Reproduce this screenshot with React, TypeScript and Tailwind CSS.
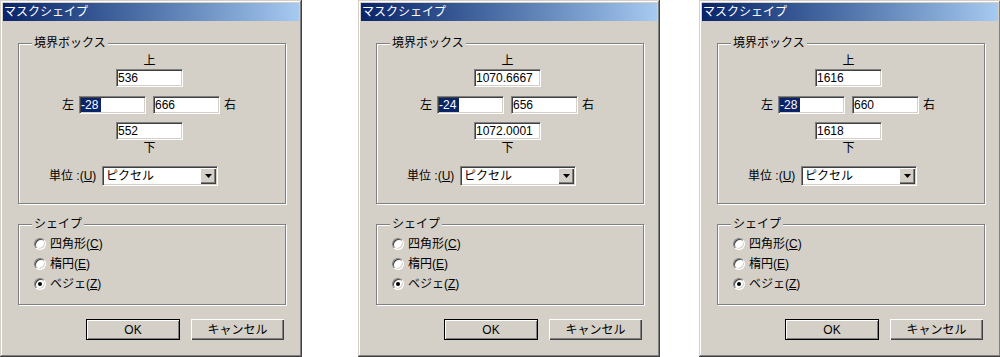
const sunken =
  "border border-t-[#808080] border-l-[#808080] border-b-white border-r-white shadow-[inset_1px_1px_0_#404040,inset_-1px_-1px_0_#d4d0c8]";

type Box = { top: string; left: string; right: string; bottom: string };

function Field({ value, selected, className = "" }: { value: string; selected?: boolean; className?: string }) {
  return (
    <div className={`h-[18px] w-[67px] bg-white ${sunken} flex items-center pl-[1px] ${className}`}>
      {selected ? (
        <span className="bg-[#0a246a] text-white leading-[14px] pr-[3px]">{value}</span>
      ) : (
        <span className="leading-[14px]">{value}</span>
      )}
    </div>
  );
}

function Radio({ label, keyChar, checked }: { label: string; keyChar: string; checked?: boolean }) {
  return (
    <div className="h-[20px] flex items-center ml-[15px] gap-[4px]">
      <span
        className={`w-3 h-3 rounded-full bg-white ${sunken} flex items-center justify-center`}
      >
        {checked && <span className="w-1 h-1 rounded-full bg-black" />}
      </span>
      <span className="leading-[14px]">
        {label}(<span className="underline">{keyChar}</span>)
      </span>
    </div>
  );
}

function Dialog({ box, className = "" }: { box: Box; className?: string }) {
  return (
    <div
      className={`relative w-[302px] h-[357px] shrink-0 bg-[#d4d0c8] pt-[3px] shadow-[inset_-1px_-1px_0_#404040,inset_1px_1px_0_#d4d0c8,inset_-2px_-2px_0_#808080,inset_2px_2px_0_#fff] ${className}`}
    >
      <div className="mx-[3px] h-[18px] bg-gradient-to-r from-[#0a246a] to-[#a6caf0] text-white leading-[18px] pl-[1px]">
        マスクシェイプ
      </div>

      {/* 境界ボックス */}
      <div className="relative ml-[18px] mt-[22px] w-[268px] h-[161px] border border-[#808080] shadow-[1px_1px_0_#fff,inset_1px_1px_0_#fff] pt-[10px]">
        <span className="absolute left-[13px] top-[-8px] px-[2px] bg-[#d4d0c8] leading-[14px]">境界ボックス</span>

        <div className="ml-[97px] w-[67px] flex flex-col items-center">
          <span className="leading-[14px]">上</span>
          <Field value={box.top} className="mt-[1px]" />
        </div>

        <div className="mt-[9px] flex items-center">
          <span className="ml-[43px] w-[12px] leading-[14px]">左</span>
          <Field value={box.left} selected className="ml-[5px]" />
          <Field value={box.right} className="ml-[7px]" />
          <span className="ml-[4px] leading-[14px]">右</span>
        </div>

        <div className="ml-[97px] w-[67px] mt-[8px] flex flex-col items-center">
          <Field value={box.bottom} />
          <span className="mt-[1px] leading-[14px]">下</span>
        </div>

        <div className="mt-[11px] flex items-center">
          <span className="ml-[30px] w-[53px] leading-[14px]">
            単位 :(<span className="underline">U</span>)
          </span>
          <div className={`w-[116px] h-[20px] bg-white ${sunken} flex items-center justify-between pl-[3px] pr-[1px]`}>
            <span className="leading-[14px]">ピクセル</span>
            <span className="w-[16px] h-[16px] bg-[#d4d0c8] shadow-[inset_1px_1px_0_#fff,inset_-1px_-1px_0_#404040,inset_-2px_-2px_0_#808080] flex items-center justify-center">
              <svg width="7" height="4" viewBox="0 0 7 4">
                <path d="M0 0h7L3.5 4z" fill="#000" />
              </svg>
            </span>
          </div>
        </div>
      </div>

      {/* シェイプ */}
      <div className="relative ml-[18px] mt-[20px] w-[268px] h-[81px] border border-[#808080] shadow-[1px_1px_0_#fff,inset_1px_1px_0_#fff] pt-[9px]">
        <span className="absolute left-[13px] top-[-8px] px-[2px] bg-[#d4d0c8] leading-[14px]">シェイプ</span>
        <Radio label="四角形" keyChar="C" />
        <Radio label="楕円" keyChar="E" />
        <Radio label="ベジェ" keyChar="Z" checked />
      </div>

      <div className="mt-[14px] ml-[86px] flex gap-[11px]">
        <button className="w-[94px] h-[21px] border border-black bg-[#d4d0c8] shadow-[inset_1px_1px_0_#fff,inset_-1px_-1px_0_#808080] leading-[14px]">
          OK
        </button>
        <button className="w-[93px] h-[21px] bg-[#d4d0c8] shadow-[inset_1px_1px_0_#fff,inset_-1px_-1px_0_#404040,inset_-2px_-2px_0_#808080] leading-[14px]">
          キャンセル
        </button>
      </div>
    </div>
  );
}

const boxes: Box[] = [
  { top: "536", left: "-28", right: "666", bottom: "552" },
  { top: "1070.6667", left: "-24", right: "656", bottom: "1072.0001" },
  { top: "1616", left: "-28", right: "660", bottom: "1618" },
];

export default function App() {
  return (
    <div className="w-[1000px] h-[357px] bg-white flex overflow-hidden text-[12px] text-black font-['Liberation_Sans','Noto_Sans_CJK_JP',sans-serif]">
      <Dialog box={boxes[0]} />
      <Dialog box={boxes[1]} className="ml-[56px]" />
      <Dialog box={boxes[2]} className="ml-[39px]" />
    </div>
  );
}
